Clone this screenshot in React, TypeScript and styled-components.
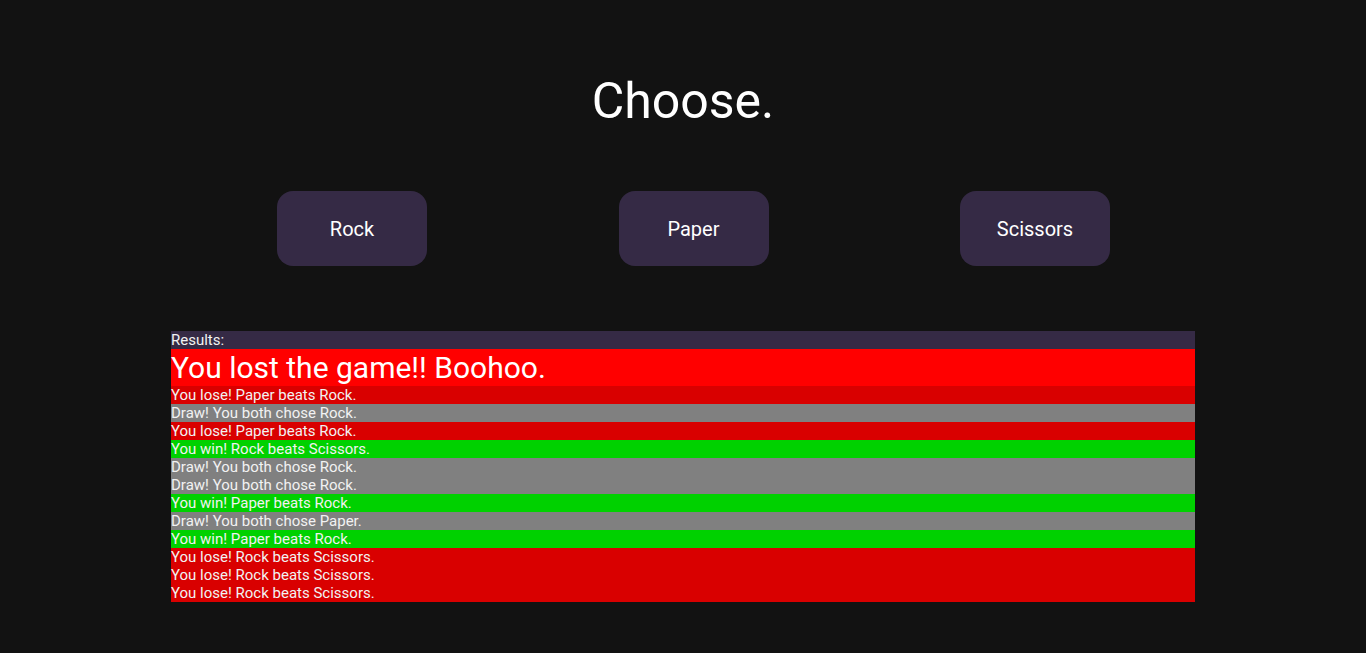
import React from "react";
import styled, { createGlobalStyle } from "styled-components";

const Global = createGlobalStyle`
  html, body { margin: 0; padding: 0; background: #121212; }
  body { font-family: Roboto, "Noto Sans", Arial, sans-serif; color: #fff; }
`;

const Page = styled.main`
  display: flex;
  flex-direction: column;
  align-items: center;
  padding-top: 72px;
`;

const Title = styled.h1`
  margin: 0;
  font-size: 50px;
  font-weight: 400;
  line-height: 58px;
  color: #fff;
`;

const Choices = styled.div`
  display: flex;
  justify-content: center;
  gap: 191.5px;
  margin-top: 61px;
  padding-left: 21px;
`;

const ChoiceButton = styled.button`
  width: 150px;
  height: 75px;
  border: none;
  border-radius: 16px;
  background: #352a45;
  color: #fff;
  font-family: Roboto, sans-serif;
  font-size: 20px;
  cursor: pointer;
`;

const Results = styled.section`
  width: 1024px;
  margin-top: 65px;
  display: flex;
  flex-direction: column;
`;

type Kind = "header" | "lose" | "draw" | "win";

const bg: Record<Kind, string> = {
  header: "#352a45",
  lose: "#d90000",
  draw: "#808080",
  win: "#00d100",
};

const Row = styled.div<{ $kind: Kind }>`
  height: 18px;
  line-height: 18px;
  font-size: 15px;
  color: #f2f2f2;
  background: ${(p) => bg[p.$kind]};
  white-space: nowrap;
`;

const Verdict = styled.div`
  height: 37px;
  line-height: 37px;
  font-size: 30px;
  color: #fff;
  background: #ff0000;
`;

const rows: [Kind, string][] = [
  ["lose", "You lose! Paper beats Rock."],
  ["draw", "Draw! You both chose Rock."],
  ["lose", "You lose! Paper beats Rock."],
  ["win", "You win! Rock beats Scissors."],
  ["draw", "Draw! You both chose Rock."],
  ["draw", "Draw! You both chose Rock."],
  ["win", "You win! Paper beats Rock."],
  ["draw", "Draw! You both chose Paper."],
  ["win", "You win! Paper beats Rock."],
  ["lose", "You lose! Rock beats Scissors."],
  ["lose", "You lose! Rock beats Scissors."],
  ["lose", "You lose! Rock beats Scissors."],
];

export default function App() {
  return (
    <>
      <Global />
      <Page>
        <Title>Choose.</Title>
        <Choices>
          <ChoiceButton>Rock</ChoiceButton>
          <ChoiceButton>Paper</ChoiceButton>
          <ChoiceButton>Scissors</ChoiceButton>
        </Choices>
        <Results>
          <Row $kind="header">Results:</Row>
          <Verdict>You lost the game!! Boohoo.</Verdict>
          {rows.map(([k, t], i) => (
            <Row key={i} $kind={k}>
              {t}
            </Row>
          ))}
        </Results>
      </Page>
    </>
  );
}
